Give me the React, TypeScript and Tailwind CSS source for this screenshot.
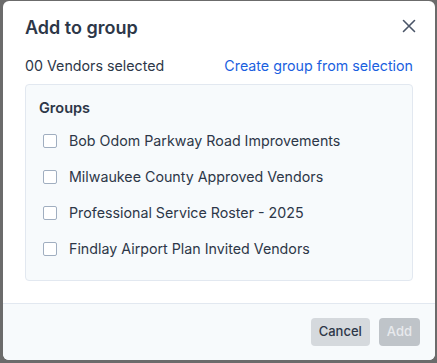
const groups = [
  "Bob Odom Parkway Road Improvements",
  "Milwaukee County Approved Vendors",
  "Professional Service Roster - 2025",
  "Findlay Airport Plan Invited Vendors",
];

export default function App() {
  return (
    <div
      className="w-[437px] h-[363px] bg-[#6b6b6b] pl-[3px] pt-[1px] overflow-hidden"
      style={{ fontFamily: "Inter, 'Liberation Sans', sans-serif" }}
    >
      <div className="w-[432px] h-[359px] bg-white rounded-[6px] flex flex-col overflow-hidden">
        {/* Header */}
        <div className="flex items-start justify-between pl-[22px] pr-[14px] pt-[13px]">
          <h2 className="text-[18px] leading-[28px] font-semibold text-[#2d3748]">Add to group</h2>
          <button type="button" className="w-6 h-6 flex items-center justify-center text-[#4a5568]">
            <svg width="14" height="14" viewBox="0 0 14 14" fill="none" stroke="currentColor" strokeWidth="1.6" strokeLinecap="round">
              <path d="M1.5 1.5l11 11M12.5 1.5l-11 11" />
            </svg>
          </button>
        </div>

        {/* Body */}
        <div className="flex-1 px-[22px]">
          <div className="flex items-center justify-between h-[20px] mt-[14px] text-[14.25px]">
            <span className="text-[#2d3748]">00 Vendors selected</span>
            <a className="text-[#1a5fe0] cursor-pointer">Create group from selection</a>
          </div>
          <div className="mt-[8px] bg-[#f7fafc] border border-[#e2e8f0] rounded-[4px] px-[13px] py-[13px]">
            <div className="text-[14.5px] leading-[20px] font-semibold text-[#2d3748]">Groups</div>
            <div className="flex flex-col mt-[5px]">
              {groups.map((g) => (
                <label key={g} className="h-[36px] flex items-center gap-[12px] pl-[4px] cursor-pointer">
                  <span className="w-[14px] h-[14px] border-[1.5px] border-[#a0aec0] bg-white rounded-[2px] shrink-0" />
                  <span className="text-[14.25px] text-[#2d3748]">{g}</span>
                </label>
              ))}
            </div>
          </div>
        </div>

        {/* Footer */}
        <div className="h-[57px] bg-[#f7fafc] border-t border-[#e2e8f0] flex items-center justify-end gap-[9px] pr-[15px]">
          <button type="button" className="h-[28px] px-[8px] rounded-[4px] bg-[#d5d9dd] text-[13px] font-medium text-[#2d3748]">
            Cancel
          </button>
          <button type="button" className="h-[28px] px-[8px] rounded-[4px] bg-[#bfc4c9] text-[13px] font-medium text-[#e8eaed]">
            Add
          </button>
        </div>
      </div>
    </div>
  );
}
